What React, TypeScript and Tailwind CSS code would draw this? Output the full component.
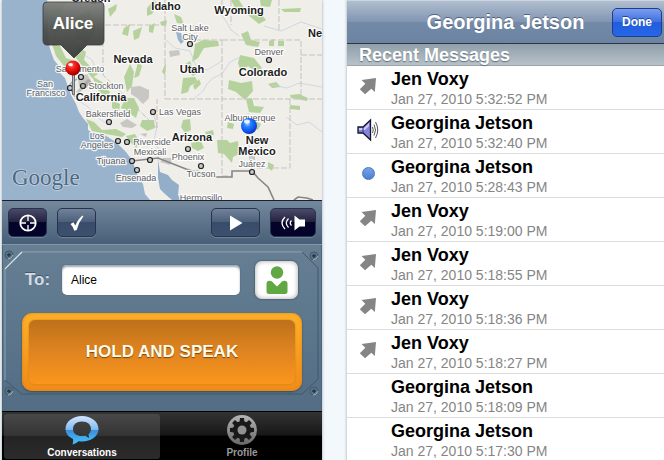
import React, { useState } from "react";

type Message = {
  name: string;
  date: string;
  icon?: "sent" | "playing" | "unread";
};

const messages: Message[] = [
  { name: "Jen Voxy", date: "Jan 27, 2010 5:32:52 PM", icon: "sent" },
  { name: "Georgina Jetson", date: "Jan 27, 2010 5:32:40 PM", icon: "playing" },
  { name: "Georgina Jetson", date: "Jan 27, 2010 5:28:43 PM", icon: "unread" },
  { name: "Jen Voxy", date: "Jan 27, 2010 5:19:00 PM", icon: "sent" },
  { name: "Jen Voxy", date: "Jan 27, 2010 5:18:55 PM", icon: "sent" },
  { name: "Jen Voxy", date: "Jan 27, 2010 5:18:36 PM", icon: "sent" },
  { name: "Jen Voxy", date: "Jan 27, 2010 5:18:27 PM", icon: "sent" },
  { name: "Georgina Jetson", date: "Jan 27, 2010 5:18:09 PM" },
  { name: "Georgina Jetson", date: "Jan 27, 2010 5:17:30 PM" },
];

const states: [string, number, number][] = [
  ["Oregon", 91, 2],
  ["Idaho", 166, 10],
  ["Wyoming", 239, 14],
  ["Nevada", 133, 63],
  ["Utah", 192, 73],
  ["Colorado", 263, 76],
  ["California", 101, 101],
  ["Arizona", 192, 141],
  ["New", 257, 144],
  ["Mexico", 257, 155],
  ["Ne", 315, 37],
];

const cities: [string, number, number][] = [
  ["Sacramento", 80, 72],
  ["Stockton", 106, 89],
  ["San", 45, 87],
  ["Francisco", 46, 96],
  ["Bakersfield", 108, 117],
  ["Los", 97, 139],
  ["Angeles", 97, 148],
  ["Riverside", 152, 145],
  ["Mexicali", 150, 155],
  ["Tijuana", 111, 164],
  ["Ensenada", 136, 181],
  ["Las Vegas", 180, 115],
  ["Salt Lake", 190, 31],
  ["City", 190, 40],
  ["Denver", 269, 55],
  ["Albuquerque", 250, 121],
  ["Phoenix", 188, 160],
  ["Tucson", 201, 177],
  ["Juárez", 252, 167],
  ["Hermosillo", 201, 201],
];

const dots = [
  [81, 77], [83, 86], [70, 88], [109, 122], [118, 141], [127, 142],
  [132, 161], [150, 160], [137, 170], [153, 112], [190, 44], [269, 60],
  [188, 149], [201, 166], [252, 172],
];

const parks = [
  "M48 4L66 2L60 14L66 24L56 34L50 30Z",
  "M74 18L90 10L96 28L88 44L76 38Z",
  "M52 44L60 46L66 58L72 60L74 70L64 66L56 56Z",
  "M78 46L86 52L84 60L90 66L98 74L92 78L84 68L76 58Z",
  "M92 76L102 82L110 92L106 98L98 90Z",
  "M112 100L120 104L119 112L112 108Z",
  "M125 98L134 98L139 108L136 118L128 112L121 108Z",
  "M86 119L94 122L102 130L116 129L126 134L122 137L106 134L92 131Z",
  "M126 136L135 134L140 142L136 148L130 142Z",
  "M142 120L154 120L155 128L147 131L140 126Z",
  "M124 77L130 64L134 72L132 86L127 92Z",
  "M138 62L142 66L139 76L134 78Z",
  "M133 31L142 27L139 38L134 40Z",
  "M108 9L117 4L116 10L110 17Z",
  "M124 28L130 24L128 36L122 34Z",
  "M147 8L154 0L158 4L152 14L147 16Z",
  "M149 26L155 23L153 33L149 32Z",
  "M160 22L167 20L166 26L161 25Z",
  "M174 14L181 17L184 24L177 23Z",
  "M231 0L239 0L244 8L258 10L266 20L259 24L248 15L237 12Z",
  "M260 0L272 0L270 7L261 6Z",
  "M281 9L301 8L300 12L284 12Z",
  "M195 44L203 40L218 41L219 46L204 48L198 58L192 62L194 52Z",
  "M185 64L190 61L193 68L199 72L193 76L187 70Z",
  "M183 78L195 77L198 82L190 86L188 92L181 94Z",
  "M193 86L199 79L201 84L195 90Z",
  "M229 80L241 83L252 81L253 91L245 100L236 92L228 89Z",
  "M241 34L248 31L251 40L260 42L258 47L246 45Z",
  "M240 55L254 58L262 68L258 74L248 66L241 72L238 63Z",
  "M269 41L274 39L274 46L269 46Z",
  "M278 41L284 41L284 46L278 46Z",
  "M268 84L276 82L281 87L272 88Z",
  "M246 99L252 98L254 106L264 107L260 113L249 112Z",
  "M290 95L299 94L308 98L307 101L291 98Z",
  "M290 105L300 106L300 110L290 109Z",
  "M217 140L227 140L230 143L238 141L239 154L233 157L232 163L224 154L218 153Z",
  "M191 143L201 141L204 148L198 151L192 148Z",
  "M183 120L190 119L191 130L185 133L181 127Z",
  "M228 122L234 124L233 129L227 128Z",
  "M205 132L213 130L214 135L207 136Z",
  "M253 119L261 124L258 130L252 126Z",
  "M268 162L274 165L272 171L268 168Z",
  "M196 169L202 172L199 177Z",
  "M165 64L166 64L165 75L162 72Z",
];

const Label = ({ text, x, y, bold }: { text: string; x: number; y: number; bold?: boolean }) => (
  <text
    x={x}
    y={y}
    textAnchor="middle"
    className={
      bold
        ? "text-[11px] leading-none font-bold fill-[#1c1c1c]"
        : "text-[9px] leading-none fill-[#5c6064]"
    }
    stroke="#fff"
    strokeOpacity="0.85"
    strokeWidth="2.5"
    strokeLinejoin="round"
    paintOrder="stroke"
  >
    {text}
  </text>
);

const MapView = () => (
  <svg
    viewBox="2 0 320 200"
    preserveAspectRatio="xMidYMid slice"
    className="block h-[200px] w-full bg-[#f0eee8]"
    role="img"
    aria-label="Map"
  >
    <defs>
      <linearGradient id="bubble" x1="0" y1="0" x2="0" y2="1">
        <stop offset="0" stopColor="#7d7f7d" />
        <stop offset="0.5" stopColor="#4b4d4b" />
        <stop offset="1" stopColor="#333633" />
      </linearGradient>
      <radialGradient id="redPin" cx="0.38" cy="0.3" r="0.7">
        <stop offset="0" stopColor="#ffd0c8" />
        <stop offset="0.25" stopColor="#f2372c" />
        <stop offset="0.65" stopColor="#e00808" />
        <stop offset="1" stopColor="#9c0000" />
      </radialGradient>
      <radialGradient id="bluePin" cx="0.4" cy="0.35" r="0.7">
        <stop offset="0" stopColor="#9fd4ff" />
        <stop offset="0.3" stopColor="#2b82ff" />
        <stop offset="0.7" stopColor="#0b53ee" />
        <stop offset="1" stopColor="#0a2cae" />
      </radialGradient>
    </defs>

    <path
      d="M2 0H47L49 12L48 30L49 45L51 52L54 60L58 65L60 73L65 78L68 87L71 95L76 104L79 112L83 118L88 124L88 130L93 133L103 134L111 139L118 144L126 152L132 160L136 171L139 178L143 184L145 194L150 200H2Z"
      fill="#99b3cc"
    />
    <path
      d="M158 160L160 172L168 175L172 180L179 185L178 195L181 200H172L165 194L160 189L158 178Z"
      fill="#93aec9"
    />
    <path d="M176 32L181 33L184 41L181 44L178 40Z" fill="#99b3cc" />
    <path d="M67 89L72 82L77 79M70 88L75 97" stroke="#99b3cc" strokeWidth="1.5" fill="none" />

    <g fill="#c9c7c3">
      <path d="M131 87L140 86L149 90L149 98L143 104L137 98L131 94Z" />
      <path d="M120 123L127 119L137 125L132 128L123 127Z" />
      <path d="M169 51L179 50L180 55L170 57Z" />
      <path d="M78 78L87 74L91 81L87 88L79 87Z" />
      <path d="M163 158L173 158L170 165L160 162Z" />
      <path d="M249 155L255 155L255 160L249 160Z" />
      <path d="M140 134L147 133L146 137Z" />
    </g>
    <g fill="#b5d29c">
      {parks.map((d) => (
        <path key={d} d={d} />
      ))}
    </g>

    <g fill="none" stroke="#c5d1df" strokeWidth="0.8">
      <path d="M64 34L74 40L80 52L92 60L97 72" />
      <path d="M74 98L87 106L98 118L111 126" />
      <path d="M166 40L175 48L190 51L196 66L207 70L222 61" />
      <path d="M195 98L203 91L207 84L213 78L222 74L230 62L240 57" />
      <path d="M248 113L250 126L247 139L251 153L252 171" />
      <path d="M153 112L157 126L154 141L159 150L158 161" />
      <path d="M215 9L224 18L231 30L239 36" />
      <path d="M264 26L281 31L301 22L322 29" />
      <path d="M272 85L287 88L299 83L322 87" />
      <path d="M286 117L297 125L309 122L322 132" />
    </g>
    <g fill="none" stroke="#c6c3c0" strokeWidth="1" strokeDasharray="6 2">
      <path d="M57 25H165M103 25V75L157 128M165 26V99M157 128V99" />
      <path d="M165 99H322M222 40V176M194 25V40H222M222 40H301V99" />
      <path d="M290 99V168H254M222 176H232M231 0V25M279 0V30M222 0V8" />
      <path d="M301 55H322M165 0V25" />
    </g>
    <path
      d="M132 161L158 158L186 169L214 177H232V171H252L258 178L268 187L274 200M294 200L298 197L307 198L313 200"
      fill="none"
      stroke="#868686"
      strokeWidth="1.6"
    />

    {states.map(([text, x, y]) => (
      <Label key={text} text={text} x={x} y={y} bold />
    ))}
    {cities.map(([text, x, y]) => (
      <Label key={text} text={text} x={x} y={y} />
    ))}
    {dots.map(([x, y]) => (
      <circle key={`${x}-${y}`} cx={x} cy={y} r="2.5" fill="#c9c9c9" stroke="#222" strokeWidth="1.2" />
    ))}

    <path d="M76 92L88 79L92 82L79 93Z" fill="#555" opacity="0.25" />
    <rect x="72" y="73" width="3" height="22" rx="1" fill="#696e72" />
    <rect x="73" y="73" width="1" height="21" fill="#b5babd" />
    <circle cx="73" cy="68" r="7.5" fill="url(#redPin)" />
    <ellipse cx="70.5" cy="64.5" rx="2.3" ry="1.6" fill="#fff" opacity="0.9" />

    <path
      d="M47 2H100Q104 2 104 6V40Q104 45 100 45H87L74 58L61 45H47Q43 45 43 40V6Q43 2 47 2Z"
      fill="url(#bubble)"
      stroke="#2f3230"
      strokeOpacity="0.8"
      opacity="0.93"
    />
    <text x="73" y="29" textAnchor="middle" className="text-[17px] font-bold fill-white">
      Alice
    </text>

    <circle cx="249" cy="126" r="8" fill="url(#bluePin)" />
    <ellipse cx="247" cy="121.5" rx="3" ry="2" fill="#fff" opacity="0.85" />

    <text
      x="12"
      y="185"
      className="font-['Liberation_Serif',serif] text-[23px] fill-[#4f6880]"
      stroke="#c3d3e2"
      strokeWidth="1.5"
      paintOrder="stroke"
    >
      Google
    </text>
  </svg>
);

const SentIcon = () => (
  <svg width="18" height="18" viewBox="0 0 18 18" aria-hidden="true">
    <path d="M2.500 3L17 1L15.800 15L12.300 11.800L6 17.300L0.800 12.200L6.300 6.800Z" fill="#858585" />
  </svg>
);

const PlayingIcon = () => (
  <svg width="22" height="24" viewBox="0 0 22 24" aria-hidden="true">
    <path d="M1 9H6L13.5 2V22L6 15H1Z" fill="#8484dc" stroke="#15152e" strokeWidth="1.3" />
    <path d="M2 10H7L12 5V8L8 12H2Z" fill="#c9c9ff" />
    <path d="M6 9V15" stroke="#33336b" />
    <path d="M15.5 9Q17 12 15.5 15M17 6.500Q20 12 17 17.500M18.500 4Q23 12 18.500 20" fill="none" stroke="#444" strokeWidth="0.9" />
  </svg>
);

const MessageIcon = ({ icon }: { icon?: Message["icon"] }) => {
  if (icon === "sent") return <SentIcon />;
  if (icon === "playing") return <PlayingIcon />;
  if (icon === "unread")
    return <span className="size-[13px] rounded-full border border-[#4775bd] bg-linear-to-b from-[#75a3e8] to-[#4c80d1]" />;
  return null;
};

const toolButton =
  "flex h-[29px] items-center justify-center rounded-[5px] border border-[#26334f] text-white shadow-[0_1px_0_rgba(255,255,255,0.2)]";
const darkTool = "bg-[linear-gradient(#4b4b69_0%,#22223f_48%,#04042b_50%,#04042b_100%)]";
const blueTool = "bg-[linear-gradient(#71829a_0%,#4c607b_48%,#394d6a_50%,#3d506e_100%)]";

const Toolbar = () => (
  <div className="flex h-[44px] items-center justify-between border-t border-[#1a2030] bg-linear-to-b from-[#75899d] to-[#475f78] px-1.5">
    <div className="flex gap-2.5">
      <button aria-label="Locate" className={`${toolButton} ${darkTool} w-[39px]`}>
        <svg width="20" height="20" viewBox="0 0 20 20" fill="none" stroke="currentColor">
          <circle cx="10" cy="10" r="7.7" strokeWidth="1.8" />
          <path d="M10 2V8M10 12V18M2 10H8M12 10H18" strokeWidth="1.3" />
        </svg>
      </button>
      <button aria-label="Select" className={`${toolButton} ${blueTool} w-[39px]`}>
        <svg width="16" height="18" viewBox="0 0 16 18">
          <path d="M1.500 10L4.500 8.300L6.300 11.500Q9 5 13.500 1.500L14.300 2.500Q9.800 8 7.700 16L5.300 16.800Q4 12.500 1.500 10Z" fill="currentColor" />
        </svg>
      </button>
    </div>
    <div className="flex gap-2.5">
      <button aria-label="Play" className={`${toolButton} ${blueTool} w-[49px]`}>
        <svg width="14" height="16" viewBox="0 0 14 16">
          <path d="M1 0.500L13.500 8L1 15.500Z" fill="currentColor" />
        </svg>
      </button>
      <button aria-label="Speaker" className={`${toolButton} ${darkTool} w-[46px]`}>
        <svg width="26" height="18" viewBox="0 0 26 18">
          <path d="M14.500 1.500L19.500 5.500H25V12.500H19.500L14.500 16.500Z" fill="currentColor" />
          <path d="M5 3Q-1 9 5 15M8.500 4.500Q4 9 8.500 13.500M11.500 6.500Q9 9 11.500 11.500" fill="none" stroke="currentColor" strokeWidth="1.3" />
        </svg>
      </button>
    </div>
  </div>
);

const screws = [[7, 10], [312, 11], [7, 147], [312, 147]];

const PanelFrame = () => (
  <svg
    viewBox="0 0 320 167"
    preserveAspectRatio="none"
    className="pointer-events-none absolute inset-0 size-full"
    fill="none"
    aria-hidden="true"
  >
    <path d="M0.500 0V167M319.500 0V167" stroke="#4d6679" />
    <path d="M3 136V24L20 7H300" stroke="#8fa4b5" />
    <path d="M300 7L316 23V135L300 150H20L3 136" stroke="#3f586d" />
    <path d="M3 24L20 7" stroke="#dbe5ec" strokeWidth="1.2" />
    {screws.map(([x, y]) => (
      <g key={`${x}-${y}`}>
        <circle cx={x} cy={y} r="4" fill="#5d7488" stroke="#40586b" />
        <path d={`M${x - 2} ${y}h4M${x} ${y - 2}v4`} stroke="#1f3341" strokeWidth="1.2" />
        <path d={`M${x - 1} ${y + 4}q4 0 5 -4`} stroke="#a5b8c7" />
      </g>
    ))}
  </svg>
);

const TalkPanel = () => {
  const [to, setTo] = useState("Alice");

  return (
    <div className="relative flex h-[167px] flex-col border-t border-[#8498a8] bg-linear-to-b from-[#667f93] to-[#526d84] px-5 pt-4">
      <PanelFrame />
      <div className="relative flex items-center pr-1 pl-[3px]">
        <label htmlFor="to" className="w-[37px] text-[17px] font-bold text-[#d3dde7] [text-shadow:0_-1px_0_#40566a]">
          To:
        </label>
        <input
          id="to"
          value={to}
          onChange={(e) => setTo(e.target.value)}
          className="h-[30px] min-w-0 flex-1 rounded-[5px] bg-white px-[9px] text-xs text-black shadow-[inset_0_2px_2px_#a0a8af,0_0_1px_#34495c] outline-none"
        />
        <button
          aria-label="Choose contact"
          className="ml-[15px] flex h-[38px] w-[43px] items-center justify-center rounded-[7px] bg-white shadow-[inset_0_0_5px_#a5a5a5,0_0_2px_#26394b]"
        >
          <svg width="24" height="30" viewBox="0 0 24 30">
            <circle cx="12" cy="7.5" r="6.2" fill="#5fa844" />
            <path d="M1.500 18.500Q1.500 16 4 15.800Q6 15.600 7 16.500L12 21.500L17 16.500Q18 15.600 20 15.800Q22.500 16 22.500 18.500V26.500Q22.500 29 20 29H4Q1.500 29 1.500 26.500Z" fill="#5fa844" />
          </svg>
        </button>
      </div>
      <button className="relative mt-3.5 h-[78px] rounded-[10px] bg-linear-to-b from-[#ffb028] to-[#f08b18] p-[7px] shadow-[0_1px_2px_#394c5c,inset_0_0_3px_#d7831b]">
        <span className="flex h-full items-center justify-center rounded-[6px] bg-linear-to-b from-[#bd711a] via-[#e08420] to-[#fa961c] text-[17px] font-bold text-[#fffbea] shadow-[0_0_2px_#c97914] [text-shadow:0_1px_1px_#7b4509]">
          HOLD AND SPEAK
        </span>
      </button>
    </div>
  );
};

const TabBar = () => (
  <nav className="grid h-[49px] grid-cols-2 border-t border-black bg-[linear-gradient(#333_0%,#171717_48%,#000_50%,#000_100%)] text-[10px] font-bold">
    <a href="#conversations" className="my-0.5 mr-0.5 ml-0.5 flex flex-col items-center rounded-[3px] bg-[linear-gradient(#484848_0%,#343434_48%,#242424_50%,#2b2b2b_100%)] text-white">
      <svg width="36" height="33" viewBox="0 -1 36 33" aria-hidden="true">
        <defs>
          <linearGradient id="chat" x1="0" y1="0" x2="0" y2="1">
            <stop offset="0" stopColor="#d2e7ff" />
            <stop offset="0.48" stopColor="#80b9ef" />
            <stop offset="0.5" stopColor="#378edf" />
            <stop offset="1" stopColor="#49c4fa" />
          </linearGradient>
        </defs>
        <path
          fillRule="evenodd"
          d="M18 1C27 1 34.500 6.500 34.500 14S27 26.500 18 26.500L14.500 26.300Q12 29 8.500 29.500Q9.500 27 9 24Q1.500 20.500 1.500 14C1.500 6.500 9 1 18 1ZM18 6.500C12.500 6.500 9 9.500 9 14S12.500 21 18 21L21.500 20.800L25 23L24.500 19.500Q27 17.500 27 14C27 9.500 23.500 6.500 18 6.500Z"
          fill="url(#chat)"
        />
      </svg>
      <span className="leading-3">Conversations</span>
    </a>
    <a href="#profile" className="my-0.5 flex flex-col items-center text-[#999]">
      <svg width="32" height="33" viewBox="0 0 32 33" aria-hidden="true">
        <defs>
          <linearGradient id="gear" x1="0" y1="0" x2="0" y2="1">
            <stop offset="0" stopColor="#b5b5b5" />
            <stop offset="1" stopColor="#686868" />
          </linearGradient>
        </defs>
        <circle cx="16" cy="16" r="15" fill="url(#gear)" />
        <g fill="#191919">
          <circle cx="16" cy="16" r="9" />
          {[0, 45, 90, 135, 180, 225, 270, 315].map((a) => (
            <path key={a} d="M13.500 9L14 4H18L18.500 9Z" transform={`rotate(${a} 16 16)`} />
          ))}
        </g>
        <circle cx="16" cy="16" r="4.500" fill="#919191" />
      </svg>
      <span className="leading-3">Profile</span>
    </a>
  </nav>
);

const MessageList = () => (
  <section className="min-w-0 bg-white shadow-[0_0_3px_#9ba5ad]">
    <header className="grid h-[44px] grid-cols-[1fr_auto_1fr] items-center border-t border-b border-t-[#cdd6e0] border-b-[#2d3642] bg-[linear-gradient(#b0becf_0%,#8195b1_50%,#7389a8_51%,#6c83a2_100%)]">
      <h1 className="col-start-2 text-xl font-bold text-white [text-shadow:0_-1px_0_#52647b]">Georgina Jetson</h1>
      <button className="mr-0.5 h-[29px] w-[50px] justify-self-end rounded-[5px] border border-[#1b3e91] bg-[linear-gradient(#7a9ded_0%,#3d70e1_48%,#215ddd_50%,#2767e8_100%)] text-xs font-bold text-white [text-shadow:0_-1px_0_#234691]">
        Done
      </button>
    </header>
    <h2 className="h-[22px] border-b border-[#9aa5ac] bg-linear-to-b from-[#909faa] to-[#b7c1c8] pl-3 text-lg leading-[22px] font-bold text-white [text-shadow:0_1px_1px_#65717b]">
      Recent Messages
    </h2>
    <ul>
      {messages.map((message) => (
        <li key={message.date} className="flex h-[44px] border-b border-[#dcdcdc]">
          <div className="flex w-11 items-center justify-center pr-0.5 pb-1">
            <MessageIcon icon={message.icon} />
          </div>
          <div className="pt-0.5">
            <div className="text-lg leading-[22px] font-bold text-black">{message.name}</div>
            <div className="text-sm leading-[18px] text-[#858585]">{message.date}</div>
          </div>
        </li>
      ))}
    </ul>
  </section>
);

const App = () => {
  return (
    <main className="grid h-screen grid-cols-[320fr_25px_317fr] overflow-hidden bg-[#f3f8fc] pl-0.5 font-['Liberation_Sans',Arial,sans-serif]">
      <section className="min-w-0 shadow-[0_0_3px_#9ba5ad]">
        <MapView />
        <Toolbar />
        <TalkPanel />
        <TabBar />
      </section>
      <div />
      <MessageList />
    </main>
  );
};

export default App;
